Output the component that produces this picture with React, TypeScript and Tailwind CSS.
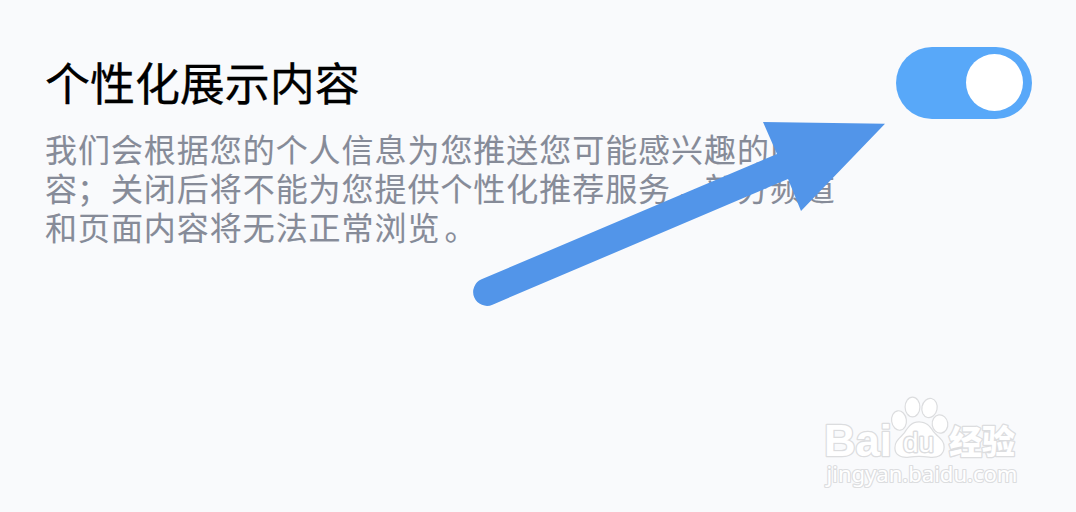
import { useState } from "react";

function Toggle() {
  const [on, setOn] = useState(true);
  return (
    <button
      role="switch"
      aria-checked={on}
      onClick={() => setOn(!on)}
      className={`mt-[47px] flex h-[72px] w-[136px] shrink-0 items-center rounded-full px-[9px] ${on ? "justify-end bg-[#58a8f9]" : "justify-start bg-gray-300"}`}
    >
      <span className="mb-px size-[57px] rounded-full bg-white" />
    </button>
  );
}

function Arrow() {
  return (
    <svg className="pointer-events-none absolute inset-0" width="1076" height="512" viewBox="0 0 1076 512" fill="#5295e9">
      <path d="M481.5 279.3 L777 154 L763 122 L885 123.7 L801 211 L788 179 L492.5 304.7 A13.8 13.8 0 0 1 481.5 279.3Z" />
    </svg>
  );
}

function Watermark() {
  return (
    <svg
      className="pointer-events-none absolute top-[385px] left-[810px]"
      width="220"
      height="115"
      viewBox="0 0 220 115"
      fill="#ffffff"
      stroke="#dcdddf"
      strokeWidth="2.6"
      strokeLinejoin="round"
      paintOrder="stroke"
    >
      <text x="14" y="71" fontSize="44" fontWeight="700" fontFamily="'Liberation Sans', sans-serif" textLength="68" lengthAdjust="spacingAndGlyphs">Bai</text>
      <text x="139" y="69" fontSize="33" fontWeight="900" fontFamily="'Noto Sans CJK SC', sans-serif" textLength="66" lengthAdjust="spacingAndGlyphs">经验</text>
      <g strokeWidth="2.4">
        <ellipse cx="89" cy="35.5" rx="6.8" ry="9.2" transform="rotate(-8 89 35.5)" />
        <ellipse cx="102.5" cy="22" rx="6.8" ry="9.3" />
        <ellipse cx="119.5" cy="23" rx="7" ry="9.1" transform="rotate(12 119.5 23)" />
        <ellipse cx="130" cy="39" rx="7.2" ry="8.6" transform="rotate(-8 130 39)" />
        <path d="M109 37.5C102 37.5 99 42 95 48C90 54 85.5 56 85.5 63C85.5 70 92 72.5 99 71.5C106 70.5 112 70.5 119 71.5C127 72.5 133.5 70 133.5 62C133.5 55 128 53 123 47C119 41 116 37.5 109 37.5Z" />
      </g>
      <text x="93" y="66.5" fontSize="27" fontWeight="400" strokeWidth="2.8" fontFamily="'Liberation Sans', sans-serif" textLength="31" lengthAdjust="spacingAndGlyphs">du</text>
      <text x="16.5" y="97" fontSize="21" fontWeight="400" strokeWidth="2.2" fontFamily="'Noto Sans', sans-serif" textLength="191" lengthAdjust="spacingAndGlyphs">jingyan.baidu.com</text>
    </svg>
  );
}

export default function App() {
  return (
    <main className="relative h-[512px] w-full overflow-hidden bg-[#f9fafc] font-['Noto_Sans_CJK_SC',sans-serif]">
      <section className="flex items-start justify-between pr-11 pl-[45px]">
        <div className="pt-[52px]">
          <h1 className="text-[45px] leading-[60px] tracking-[-0.05px] whitespace-nowrap text-black [-webkit-text-stroke:0.3px_#000]">
            个性化展示内容
          </h1>
          <p className="mt-[17px] text-[32px] leading-[39px] tracking-[0.95px] whitespace-nowrap text-[#868b98] [-webkit-text-stroke:0.1px_#868b98]">
            我们会根据您的个人信息为您推送您可能感兴趣的内
            <br />
            容<span className="mr-px -ml-px">；</span>关闭后将不能为您提供个性化推荐服务<span className="-mr-1 ml-1">，</span>部分频道
            <br />
            和页面内容将无法正常浏览<span className="ml-1">。</span>
          </p>
        </div>
        <Toggle />
      </section>
      <Arrow />
      <Watermark />
    </main>
  );
}
